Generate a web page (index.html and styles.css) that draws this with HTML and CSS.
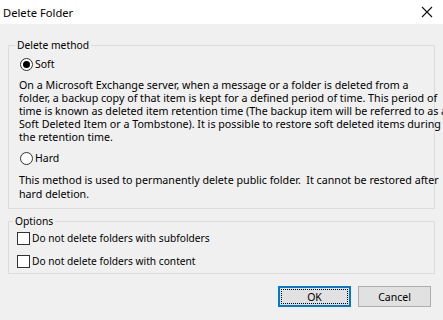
FILE: index.html
```
<!DOCTYPE html>
<html lang="en">
<head>
    <meta charset="UTF-8">
    <title>Delete Folder</title>
    <link rel="stylesheet" href="styles.css">
</head>
<body>

    <div class="titlebar">
        <span class="title">Delete Folder</span>
        <svg class="close" width="12" height="12" viewBox="0 0 12 12">
            <path d="M1 1 L11 11 M11 1 L1 11" stroke="#111" stroke-width="1.1" fill="none"/>
        </svg>
    </div>

    <div class="content">
        <fieldset class="group method">
            <legend>Delete method</legend>
            <label class="option radio-row">
                <span class="radio checked"></span>Soft
            </label>
            <p class="desc">
                On a Microsoft Exchange server, when a message or a folder is deleted from a<br>
                folder, a backup copy of that item is kept for a defined period of time. This period of<br>
                time is known as deleted item retention time (The backup item will be referred to as a<br>
                Soft Deleted Item or a Tombstone). It is possible to restore soft deleted items during<br>
                the retention time.
            </p>
            <label class="option radio-row hard">
                <span class="radio"></span>Hard
            </label>
            <p class="desc hard-desc">
                This method is used to permanently delete public folder.&nbsp; It cannot be restored after<br>
                hard deletion.
            </p>
        </fieldset>

        <fieldset class="group options">
            <legend>Options</legend>
            <label class="option check-row">
                <span class="checkbox"></span>Do not delete folders with subfolders
            </label>
            <label class="option check-row second">
                <span class="checkbox"></span>Do not delete folders with content
            </label>
        </fieldset>

        <div class="buttons">
            <button type="button" class="btn default"><span class="focus">OK</span></button>
            <button type="button" class="btn">Cancel</button>
        </div>
    </div>

</body>
</html>
```

FILE: styles.css
```
body {
    margin: 0;
    background-color: #f0f0f0;
    font-family: 'Noto Sans', 'Open Sans', sans-serif;
    font-size: 10.5px;
    color: #000;
}
.titlebar {
    height: 24px;
    background-color: #fff;
    display: flex;
    align-items: center;
    justify-content: space-between;
    padding: 0 10px 0 3px;
}
.title {
    font-size: 11.2px;
    color: #000;
}
.content {
    padding: 14px 8px 0 8px;
}
.group {
    margin: 0;
    padding: 0 0 0 10px;
    border: 1px solid #dcdcdc;
    min-width: 0;
}
legend {
    font-size: 10.3px;
    line-height: 15px;
    padding: 0 2px;
    margin-left: -4px;
}
.option {
    display: flex;
    align-items: center;
    height: 15px;
    line-height: 15px;
    white-space: nowrap;
}
.radio-row {
    margin-top: 4px;
}
.radio-row.hard {
    margin-top: 7px;
}
.radio {
    width: 11px;
    height: 11px;
    border: 1px solid #333;
    border-radius: 50%;
    background-color: #fff;
    margin: 0 2px 0 1px;
    display: flex;
    align-items: center;
    justify-content: center;
}
.radio.checked::after {
    content: "";
    width: 7px;
    height: 7px;
    border-radius: 50%;
    background-color: #000;
}
.desc {
    margin: 7px 0 0 0;
    font-size: 10.7px;
    line-height: 13px;
    white-space: nowrap;
}
.desc.hard-desc {
    margin: 8px 0 7px 0;
    line-height: 13.5px;
}
.options {
    margin-top: 5px;
    padding-left: 8px;
}
.check-row {
    font-size: 10.2px;
    margin-top: 2px;
}
.check-row.second {
    margin-top: 8px;
    margin-bottom: 4px;
}
.checkbox {
    width: 11px;
    height: 11px;
    border: 1px solid #333;
    background-color: #fff;
    margin-right: 2px;
}
.buttons {
    display: flex;
    justify-content: flex-end;
    gap: 7px;
    margin-top: 12px;
    padding-right: 4px;
}
.btn {
    width: 73px;
    height: 21px;
    padding: 0;
    font-family: inherit;
    font-size: 10.5px;
    color: #000;
    background-color: #e1e1e1;
    border: 1px solid #adadad;
    border-radius: 0;
}
.btn.default {
    border: 2px solid #0078d7;
    padding: 1px;
}
.focus {
    display: flex;
    align-items: center;
    justify-content: center;
    height: 100%;
    border: 1px dotted #000;
    box-sizing: border-box;
}
```
